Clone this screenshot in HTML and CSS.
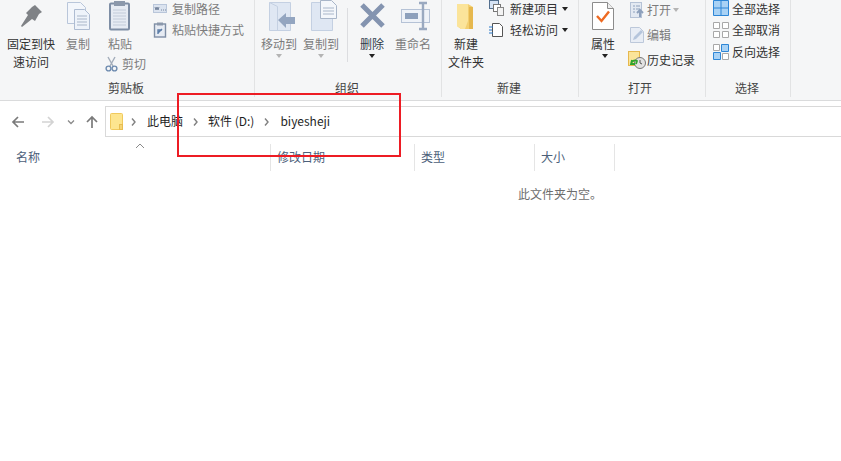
FILE: index.html
```html
<!DOCTYPE html>
<html lang="zh-CN">
<head>
<meta charset="utf-8">
<title>biyesheji</title>
<link rel="stylesheet" href="styles.css">
</head>
<body>
<div class="ribbon">
  <section class="group g-clip">
    <div class="tools">
      <div class="big w-pin">
        <svg class="ico" width="26" height="32" viewBox="0 0 26 32"><path d="M14 7 L17 5 L24 12 L21 14 L17 21 L14 19 L4 27 L3 26 L10 15 L8 13 Z" fill="#7f8286"/></svg>
        <div class="lbl">固定到快<br>速访问</div>
      </div>
      <div class="big w-copy dim">
        <svg class="ico" width="26" height="32" viewBox="0 0 26 32"><path d="M2.5 2.5h13l5 5v16h-18z" fill="#f3f6fb" stroke="#b9c6da"/><path d="M9.5 9.5h10l5 5v15h-15z" fill="#eef3fa" stroke="#aebcd2"/><path d="M12 16h10M12 19h10M12 22h10M12 25h10" stroke="#a9b6c9"/></svg>
        <div class="lbl">复制</div>
      </div>
      <div class="col-paste">
        <div class="big w-paste dim">
          <svg class="ico" width="26" height="32" viewBox="0 0 26 32"><rect x="3" y="3.5" width="19" height="26" rx="1" fill="#e6ebf3" stroke="#7e8ea5" stroke-width="2"/><rect x="7" y="1" width="11" height="5" fill="#8b98ab"/><path d="M6 10h13M6 13h13M6 16h13M6 19h13M6 22h13M6 25h13" stroke="#c2cbd9"/></svg>
          <div class="lbl">粘贴</div>
        </div>
        <div class="row dim cut">
          <svg width="13" height="16" viewBox="0 0 13 16"><path d="M3 1l5 9M10 1L5 10" stroke="#a3adba" stroke-width="1.4" fill="none"/><circle cx="3.5" cy="12.5" r="2.4" fill="none" stroke="#6f8cb0" stroke-width="1.4"/><circle cx="9.5" cy="12.5" r="2.4" fill="none" stroke="#6f8cb0" stroke-width="1.4"/></svg>
          <span>剪切</span>
        </div>
      </div>
      <div class="col-small c-clip">
        <div class="row dim">
          <svg width="14" height="11" viewBox="0 0 14 11"><rect x=".5" y="1.5" width="13" height="8" fill="#dbe3ef" stroke="#b9c6da"/><path d="M2 4l1 3 1-3 1 3 1-3M8 7h1M10 7h1M12 7h1" stroke="#5d6f8a" fill="none" stroke-width=".8"/></svg>
          <span>复制路径</span>
        </div>
        <div class="row dim">
          <svg width="14" height="16" viewBox="0 0 14 16"><rect x="1.5" y="2" width="11" height="13" fill="#e6ebf3" stroke="#7e8ea5" stroke-width="1.4"/><rect x="4" y=".5" width="6" height="3" fill="#8b98ab"/><path d="M5 12V8h4M5 11l4-4" stroke="#5d7ea8" stroke-width="1.4" fill="none"/></svg>
          <span>粘贴快捷方式</span>
        </div>
      </div>
    </div>
    <div class="glabel pad-clip">剪贴板</div>
  </section>

  <section class="group g-org">
    <div class="tools">
      <div class="big w-move dim">
        <svg class="ico shift" width="28" height="32" viewBox="0 0 28 32"><path d="M1.5 2.5h21v28h-21z" fill="#dfe7f3" stroke="#c4d0e2"/><path d="M1.5 2.5l8 4v24" fill="none" stroke="#c4d0e2"/><path d="M10 20l8-7v4h9v7h-9v4z" fill="#93a5c0"/></svg>
        <div class="lbl">移动到</div>
        <i class="caret faint"></i>
      </div>
      <div class="big w-move dim">
        <svg class="ico shift" width="28" height="32" viewBox="0 0 28 32"><path d="M1.5 2.5h21v28h-21z" fill="#dfe7f3" stroke="#c4d0e2"/><path d="M10.5 .5h11l5 5v13h-16z" fill="#f4f7fb" stroke="#a9b6c9"/><path d="M13 8h11M13 11h11M13 14h11" stroke="#a9b6c9"/></svg>
        <div class="lbl">复制到</div>
        <i class="caret faint"></i>
      </div>
      <div class="vsep"></div>
      <div class="big w-del strong">
        <svg class="ico" width="28" height="32" viewBox="0 0 28 32"><path d="M4 5l21 21M25 5L4 26" stroke="#8494b0" stroke-width="5"/></svg>
        <div class="lbl">删除</div>
        <i class="caret"></i>
      </div>
      <div class="big w-ren dim">
        <svg class="ico shift" width="30" height="32" viewBox="0 0 30 32"><rect x=".5" y="9.5" width="28" height="13" fill="#eef2f8" stroke="#b5c2d6"/><rect x="4" y="13" width="13" height="6" fill="#8da0bc"/><path d="M22 4v24M18 3h8M18 29h8" stroke="#9aa9c0" stroke-width="2.4" fill="none"/></svg>
        <div class="lbl">重命名</div>
      </div>
    </div>
    <div class="glabel pad-org">组织</div>
  </section>

  <section class="group g-new">
    <div class="tools">
      <div class="big w-newf">
        <svg class="ico" width="20" height="32" viewBox="0 0 20 32"><path d="M1 4h11l5 3v22H5l-4-3z" fill="#f3cf6f"/><path d="M1 4l11 0v17l-3 8H5l-4-3z" fill="#fbe49a"/><path d="M13 7h4v22h-4z" fill="#e6b84e"/></svg>
        <div class="lbl">新建<br>文件夹</div>
      </div>
      <div class="col-small c-new">
        <div class="row">
          <svg width="16" height="16" viewBox="0 0 16 16"><rect x=".5" y=".5" width="9" height="8" fill="#d5e3f5" stroke="#54708f"/><rect x="4.5" y="4.5" width="7" height="7" fill="#fff" stroke="#777"/><rect x="8.5" y="7.5" width="6" height="8" fill="#f3f3f3" stroke="#888"/></svg>
          <span>新建项目</span><i class="caret inline"></i>
        </div>
        <div class="row">
          <svg width="16" height="16" viewBox="0 0 16 16"><path d="M3.5 1.5h7l3 3v10h-10z" fill="#fff" stroke="#555"/><path d="M0 5h4M0 8h3M0 11h4" stroke="#2a78c8"/></svg>
          <span>轻松访问</span><i class="caret inline"></i>
        </div>
      </div>
    </div>
    <div class="glabel pad-new">新建</div>
  </section>

  <section class="group g-open">
    <div class="tools">
      <div class="big w-prop">
        <svg class="ico" width="22" height="32" viewBox="0 0 22 32"><path d="M.5 2.5h15l6 6v21H.5z" fill="#fff" stroke="#8c8c8c"/><path d="M15.5 2.5v6h6" fill="#eee" stroke="#8c8c8c"/><path d="M5 16l4.500 5L17 11.500" fill="none" stroke="#ee6a22" stroke-width="2.400"/></svg>
        <div class="lbl">属性</div>
        <i class="caret offset"></i>
      </div>
      <div class="col-open">
        <div class="row dim">
          <svg width="14" height="16" viewBox="0 0 14 16"><rect x=".5" y=".5" width="11" height="15" fill="#e3e9f2" stroke="#b5c2d6"/><path d="M3 4h2M3 7h2M3 10h2M6 4h4M6 7h4" stroke="#8da0bc"/><path d="M10 15V9M7 11l3-3 3 3" stroke="#8da0bc" stroke-width="2" fill="none"/></svg>
          <span>打开</span><i class="caret inline faint"></i>
        </div>
        <div class="row dim">
          <svg width="14" height="16" viewBox="0 0 14 16"><path d="M.5.500h9l4 4v11H.5z" fill="#e8edf5" stroke="#bcc8da"/><path d="M3 13l1-3 7-7 2 2-7 7z" fill="#b5c5dc"/></svg>
          <span>编辑</span>
        </div>
        <div class="row hist">
          <svg width="18" height="18" viewBox="0 0 18 18"><rect x=".5" y=".5" width="11" height="14" fill="#fbe49a" stroke="#e6b84e"/><circle cx="12" cy="12" r="5.500" fill="#e2e2e2" stroke="#777"/><path d="M12 9v3l2 1" stroke="#555" fill="none"/><path d="M3 13a4 4 0 0 1 6-3l-1 3 M4 9l-1 4 4 0" fill="none" stroke="#2fa52f" stroke-width="1.800"/></svg>
          <span>历史记录</span>
        </div>
      </div>
    </div>
    <div class="glabel pad-open">打开</div>
  </section>

  <section class="group g-sel">
    <div class="tools">
      <div class="col-small c-sel">
        <div class="row">
          <svg width="16" height="16" viewBox="0 0 16 16"><path d="M.5.500h15v15H.5zM8 .5v15M.5 8h15" fill="#a9d2f5" stroke="#2e86d6"/></svg>
          <span>全部选择</span>
        </div>
        <div class="row">
          <svg width="16" height="16" viewBox="0 0 16 16"><path d="M.5.500h6v6h-6zM9.500.5h6v6h-6zM.5 9.500h6v6h-6zM9.500 9.500h6v6h-6z" fill="#fff" stroke="#a8a8a8"/></svg>
          <span>全部取消</span>
        </div>
        <div class="row">
          <svg width="16" height="16" viewBox="0 0 16 16"><path d="M8.500.5h7v7h-7zM.5 8.500h7v7h-7z" fill="#a9d2f5" stroke="#2e86d6"/><path d="M.5.500h6v6h-6zM9.500 9.500h6v6h-6z" fill="#fff" stroke="#a8a8a8"/></svg>
          <span>反向选择</span>
        </div>
      </div>
    </div>
    <div class="glabel pad-sel">选择</div>
  </section>
</div>

<div class="nav">
  <svg class="n-back" width="14" height="14" viewBox="0 0 14 14"><path d="M13 7H2M7 2L2 7l5 5" fill="none" stroke="#7a7a7a" stroke-width="1.700"/></svg>
  <svg class="n-fwd" width="14" height="14" viewBox="0 0 14 14"><path d="M1 7h11M7 2l5 5-5 5" fill="none" stroke="#d3d3d3" stroke-width="1.700"/></svg>
  <svg class="n-down" width="8" height="6" viewBox="0 0 8 6"><path d="M1 1.500l3 3 3-3" fill="none" stroke="#8a8a8a" stroke-width="1.300"/></svg>
  <svg class="n-up" width="14" height="14" viewBox="0 0 14 14"><path d="M7 13V2M2 7l5-5 5 5" fill="none" stroke="#7a7a7a" stroke-width="1.700"/></svg>
  <div class="address">
    <svg width="13" height="17" viewBox="0 0 13 17"><rect x=".5" y=".5" width="12" height="16" rx="1" fill="#fde58f" stroke="#f0c95c"/><rect x="9.500" y="11.500" width="3" height="5" fill="#f5d475" stroke="#e8bd50"/></svg>
    <svg class="a-chev a-first" width="5" height="8" viewBox="0 0 5 8"><path d="M1 .5l3 3.500-3 3.500" fill="none" stroke="#808080" stroke-width="1.400"/></svg>
    <span class="crumb">此电脑</span>
    <svg class="a-chev" width="5" height="8" viewBox="0 0 5 8"><path d="M1 .5l3 3.500-3 3.500" fill="none" stroke="#808080" stroke-width="1.400"/></svg>
    <span class="crumb">软件 (D:)</span>
    <svg class="a-chev a-last" width="5" height="8" viewBox="0 0 5 8"><path d="M1 .5l3 3.500-3 3.500" fill="none" stroke="#808080" stroke-width="1.400"/></svg>
    <span class="crumb">biyesheji</span>
  </div>
</div>

<div class="header">
  <div class="hcell h-name">名称<svg class="sort" width="10" height="6" viewBox="0 0 10 6"><path d="M1 5l4-4 4 4" fill="none" stroke="#8a8a8a"/></svg></div>
  <div class="hcell h-date">修改日期</div>
  <div class="hcell h-type">类型</div>
  <div class="hcell h-size">大小</div>
</div>

<p class="empty">此文件夹为空。</p>

<div class="redbox"></div>
</body>
</html>
```
FILE: styles.css
```css
* { box-sizing: border-box; }
html, body { margin: 0; padding: 0; }
body {
  width: 841px;
  height: 461px;
  overflow: hidden;
  background: #fff;
  position: relative;
  font: 12px/16px "Noto Sans CJK SC", "Liberation Sans", sans-serif;
  color: #333;
}
svg { display: block; flex: none; }

/* ribbon */
.ribbon {
  display: flex;
  height: 101px;
  background: #f5f6f7;
  border-bottom: 1px solid #dadbdc;
  align-items: flex-start;
}
.group {
  height: 97px;
  border-right: 1px solid #e2e3e4;
  display: flex;
  flex-direction: column;
  justify-content: space-between;
}
.g-clip { width: 255px; }
.g-org { width: 187px; }
.g-new { width: 137px; }
.g-open { width: 127px; }
.g-sel { width: 85px; }
.tools { display: flex; align-items: flex-start; }
.glabel { height: 17px; line-height: 16px; color: #444; }
.pad-clip { padding-left: 108px; }
.pad-org { padding-left: 80px; }
.pad-new { padding-left: 55px; }
.pad-open { padding-left: 49px; }
.pad-sel { padding-left: 29px; }

.big { display: flex; flex-direction: column; align-items: center; text-align: center; }
.ico { height: 32px; margin-bottom: 3px; }
.shift { margin-left: 6px; }
.lbl { line-height: 17.500px; white-space: nowrap; }
.dim { color: #7c7c7c; }
.strong .lbl { color: #2f3a4a; }
.row { display: flex; align-items: center; gap: 5px; height: 22px; white-space: nowrap; }
.row span { line-height: 14px; }

.caret {
  display: block;
  width: 0; height: 0;
  margin-top: 1px;
  border: 3.500px solid transparent;
  border-top: 4px solid #222;
  border-bottom: 0;
}
.caret.faint { border-top-color: #b4b4b4; }
.caret.inline { margin: 0 0 0 -1px; }
.caret.offset { margin-left: 4px; }

.w-pin { width: 58px; padding-left: 4px; }
.w-copy { width: 40px; margin-right: 8px; }
.col-paste { width: 47px; }
.w-paste { width: 28px; }
.cut { margin-left: -1px; height: 22px; gap: 4px; }
.col-small { display: flex; flex-direction: column; }
.col-small .row:first-child { height: 18px; margin-bottom: 1px; }
.col-small .row:first-child svg { margin-top: -2px; }

.w-move { width: 42px; }
.g-org .tools { padding-left: 3px; }
.vsep { width: 1px; height: 54px; margin: 8px 4px 0 5px; background: #dcdde0; }
.w-del { width: 40px; }
.w-ren { width: 40px; margin-left: 1px; }

.w-newf { width: 48px; }
.c-new { margin-left: -1px; }

.w-prop { width: 48px; }
.col-open { display: flex; flex-direction: column; margin: -3px 0 0 3px; }
.col-open .row { height: 25px; gap: 3px; }
.col-open .hist { margin-left: -2px; gap: 1px; }

.c-sel { margin-left: 7px; }
.c-sel .row { gap: 3px; }

/* nav */
.nav { display: flex; align-items: center; height: 31px; margin-top: 5px; }
.n-back { margin-left: 11px; }
.n-fwd { margin-left: 16px; }
.n-down { margin-left: 12px; }
.n-up { margin-left: 10px; }
.address {
  flex: 1;
  height: 31px;
  margin-left: 6px;
  border: 1px solid #d9d9d9;
  border-right: 0;
  display: flex;
  align-items: center;
  padding-left: 4px;
  color: #1f1f1f;
}
.crumb { margin-bottom: 2px; }
.a-chev { margin: 0 10px; }
.a-first { margin: 0 11px 0 8px; }
.a-last { margin-right: 11px; }

/* header */
.header { display: flex; height: 27px; margin-top: 7px; color: #4c607a; }
.hcell { padding: 5px 0 0 6px; border-right: 1px solid #e5e5e5; position: relative; }
.h-name { width: 271px; padding-left: 16px; }
.h-date { width: 144px; }
.h-type { width: 120px; }
.h-size { width: 80px; }
.sort { position: absolute; left: 135px; top: -1px; }

.empty { margin: 15px 0 0 518px; color: #6d6d6d; }

.redbox {
  position: absolute;
  left: 177px;
  top: 93px;
  width: 224px;
  height: 64px;
  border: 2px solid #ed1c24;
}
```
